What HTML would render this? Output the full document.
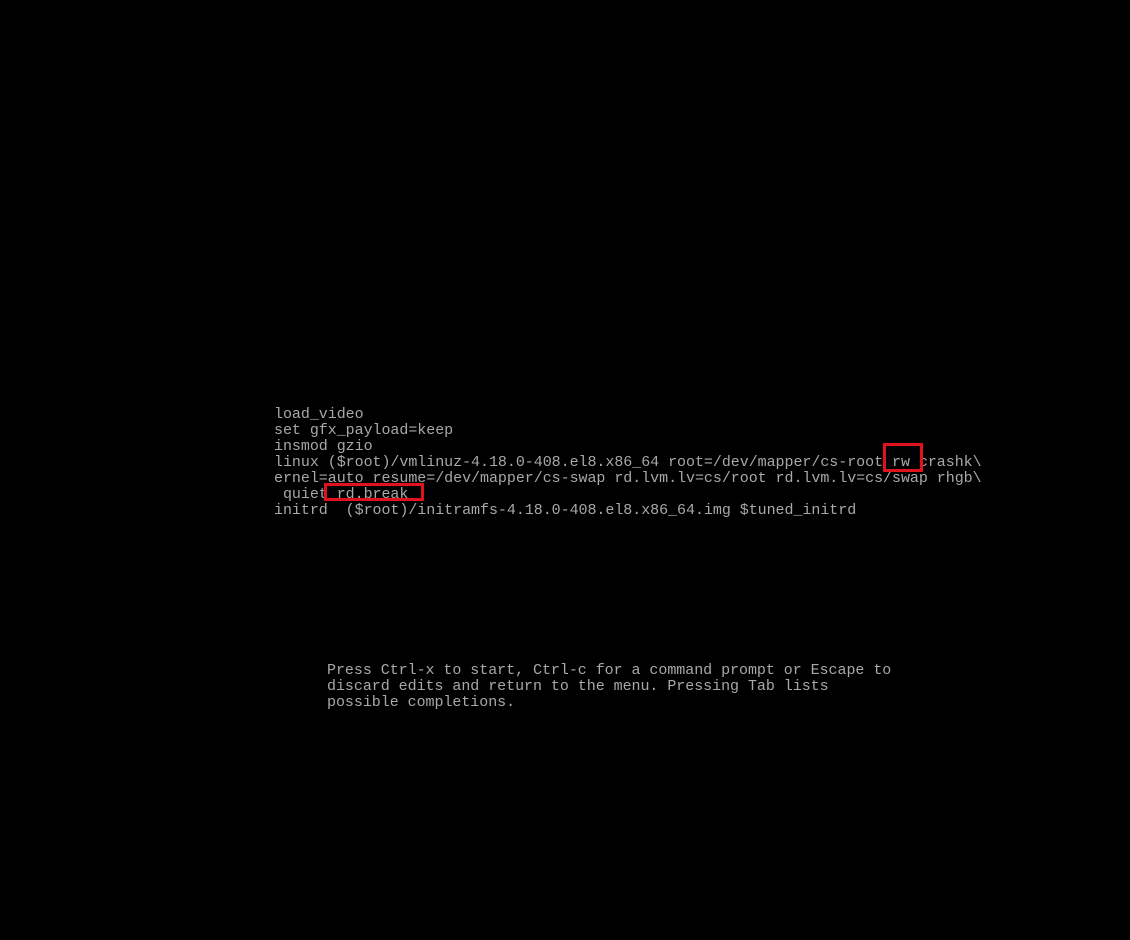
<!DOCTYPE html>
<html><head><meta charset="utf-8"><style>
html,body{margin:0;padding:0;background:#000;width:1130px;height:940px;overflow:hidden}
.t{position:absolute;font-family:"Liberation Mono",monospace;font-size:15px;line-height:16px;color:#a8a8a8;white-space:pre;letter-spacing:-0.045px}
.b{position:absolute;border:3px solid #e0121c;box-sizing:border-box}
</style></head><body>
<div class="t" style="left:274px;top:407px">load_video
set gfx_payload=keep
insmod gzio
linux ($root)/vmlinuz-4.18.0-408.el8.x86_64 root=/dev/mapper/cs-root rw crashk\
ernel=auto resume=/dev/mapper/cs-swap rd.lvm.lv=cs/root rd.lvm.lv=cs/swap rhgb\
 quiet rd.break
initrd  ($root)/initramfs-4.18.0-408.el8.x86_64.img $tuned_initrd</div>
<div class="b" style="left:883px;top:443px;width:40px;height:29px"></div>
<div class="b" style="left:324px;top:483px;width:100px;height:18px"></div>
<div class="t" style="left:327px;top:663px">Press Ctrl-x to start, Ctrl-c for a command prompt or Escape to
discard edits and return to the menu. Pressing Tab lists
possible completions.</div>
</body></html>
